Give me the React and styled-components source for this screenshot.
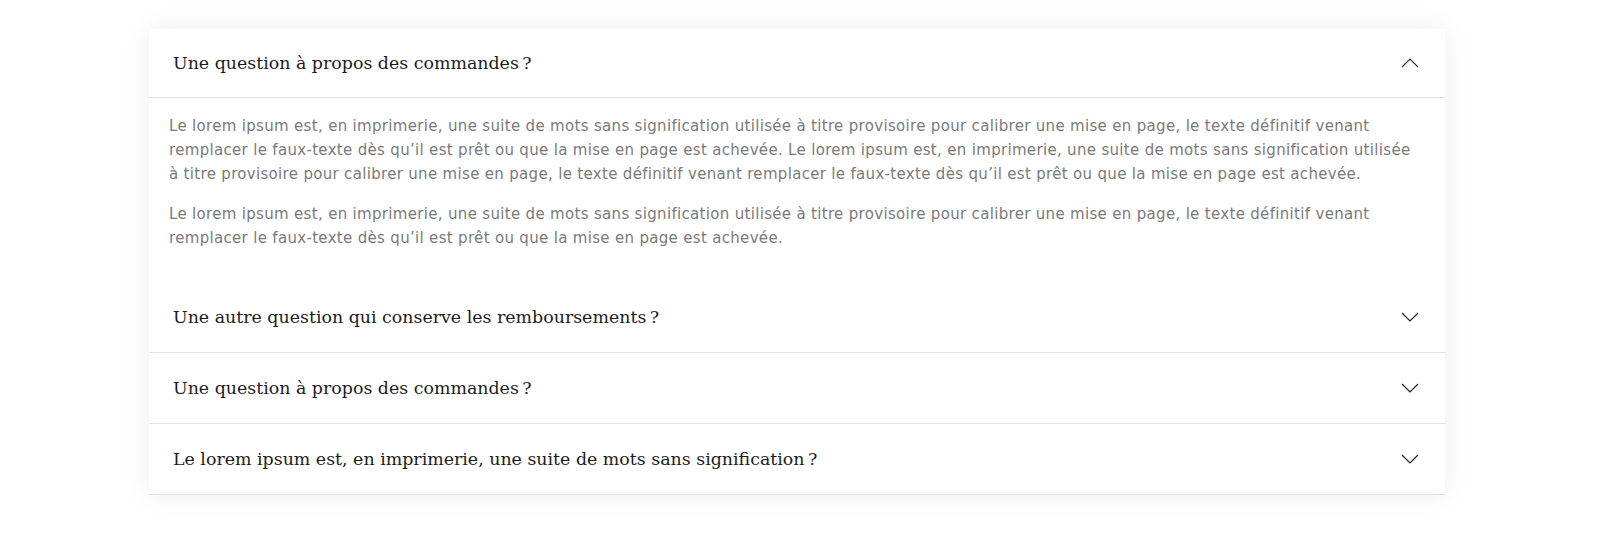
import React, { useState } from 'react';
import styled, { createGlobalStyle } from 'styled-components';

const GlobalStyle = createGlobalStyle`
  * {
    box-sizing: border-box;
  }

  body {
    margin: 0;
    background: #fff;
  }
`;

const Page = styled.div`
  padding: 29px 0 40px 149px;
`;

const MyCard = styled.div`
  width: 1296px;
  background: #fff;
  box-shadow: 0 0 28px rgba(0, 0, 0, 0.07);
`;

const MyItem = styled.div`
  border-bottom: ${(p) => (p.open ? 'none' : '1px solid #e3e3e3')};
`;

const MyHeader = styled.button`
  width: 100%;
  height: ${(p) => (p.open ? '69px' : '70px')};
  padding: 0 26px 0 24px;
  display: flex;
  align-items: center;
  justify-content: space-between;
  background: none;
  border: none;
  cursor: pointer;
  text-align: left;
  border-bottom: ${(p) => (p.open ? '1px solid #e3e3e3' : 'none')};

  font-family: 'DejaVu Serif', serif;
  font-size: 17.4px;
  color: #1c1c1c;
`;

const MyBody = styled.div`
  padding: 16px 24px 16px 20px;

  p {
    margin: 0 0 16px;
    font-family: 'DejaVu Sans', sans-serif;
    font-size: 15px;
    letter-spacing: 0.32px;
    line-height: 24px;
    color: #7a7a7a;
  }
`;

const Chevron = ({ up }) => (
  <svg width="18" height="10" viewBox="0 0 18 10" fill="none">
    <path
      d={up ? 'M1 9L9 1L17 9' : 'M1 1L9 9L17 1'}
      stroke={up ? '#3a3520' : '#222'}
      strokeWidth="1.2"
    />
  </svg>
);

const lorem =
  'Le lorem ipsum est, en imprimerie, une suite de mots sans signification utilisée à titre provisoire pour calibrer une mise en page, le texte définitif venant remplacer le faux-texte dès qu’il est prêt ou que la mise en page est achevée.';

const faq = [
  { id: 1, q: 'Une question à propos des commandes\u202F?', a: [lorem + ' ' + lorem, lorem] },
  { id: 2, q: 'Une autre question qui conserve les remboursements\u202F?', a: [lorem] },
  { id: 3, q: 'Une question à propos des commandes\u202F?', a: [lorem] },
  { id: 4, q: 'Le lorem ipsum est, en imprimerie, une suite de mots sans signification\u202F?', a: [lorem] },
];

export default function App() {
  const [openId, setOpenId] = useState(1);

  return (
    <Page>
      <GlobalStyle />
      <MyCard>
        {faq.map((e) => {
          const open = e.id === openId;
          return (
            <MyItem key={e.id} open={open}>
              <MyHeader open={open} onClick={() => setOpenId(open ? null : e.id)}>
                <span>{e.q}</span>
                <Chevron up={open} />
              </MyHeader>
              {open && (
                <MyBody>
                  {e.a.map((t, i) => (
                    <p key={i}>{t}</p>
                  ))}
                </MyBody>
              )}
            </MyItem>
          );
        })}
      </MyCard>
    </Page>
  );
}
